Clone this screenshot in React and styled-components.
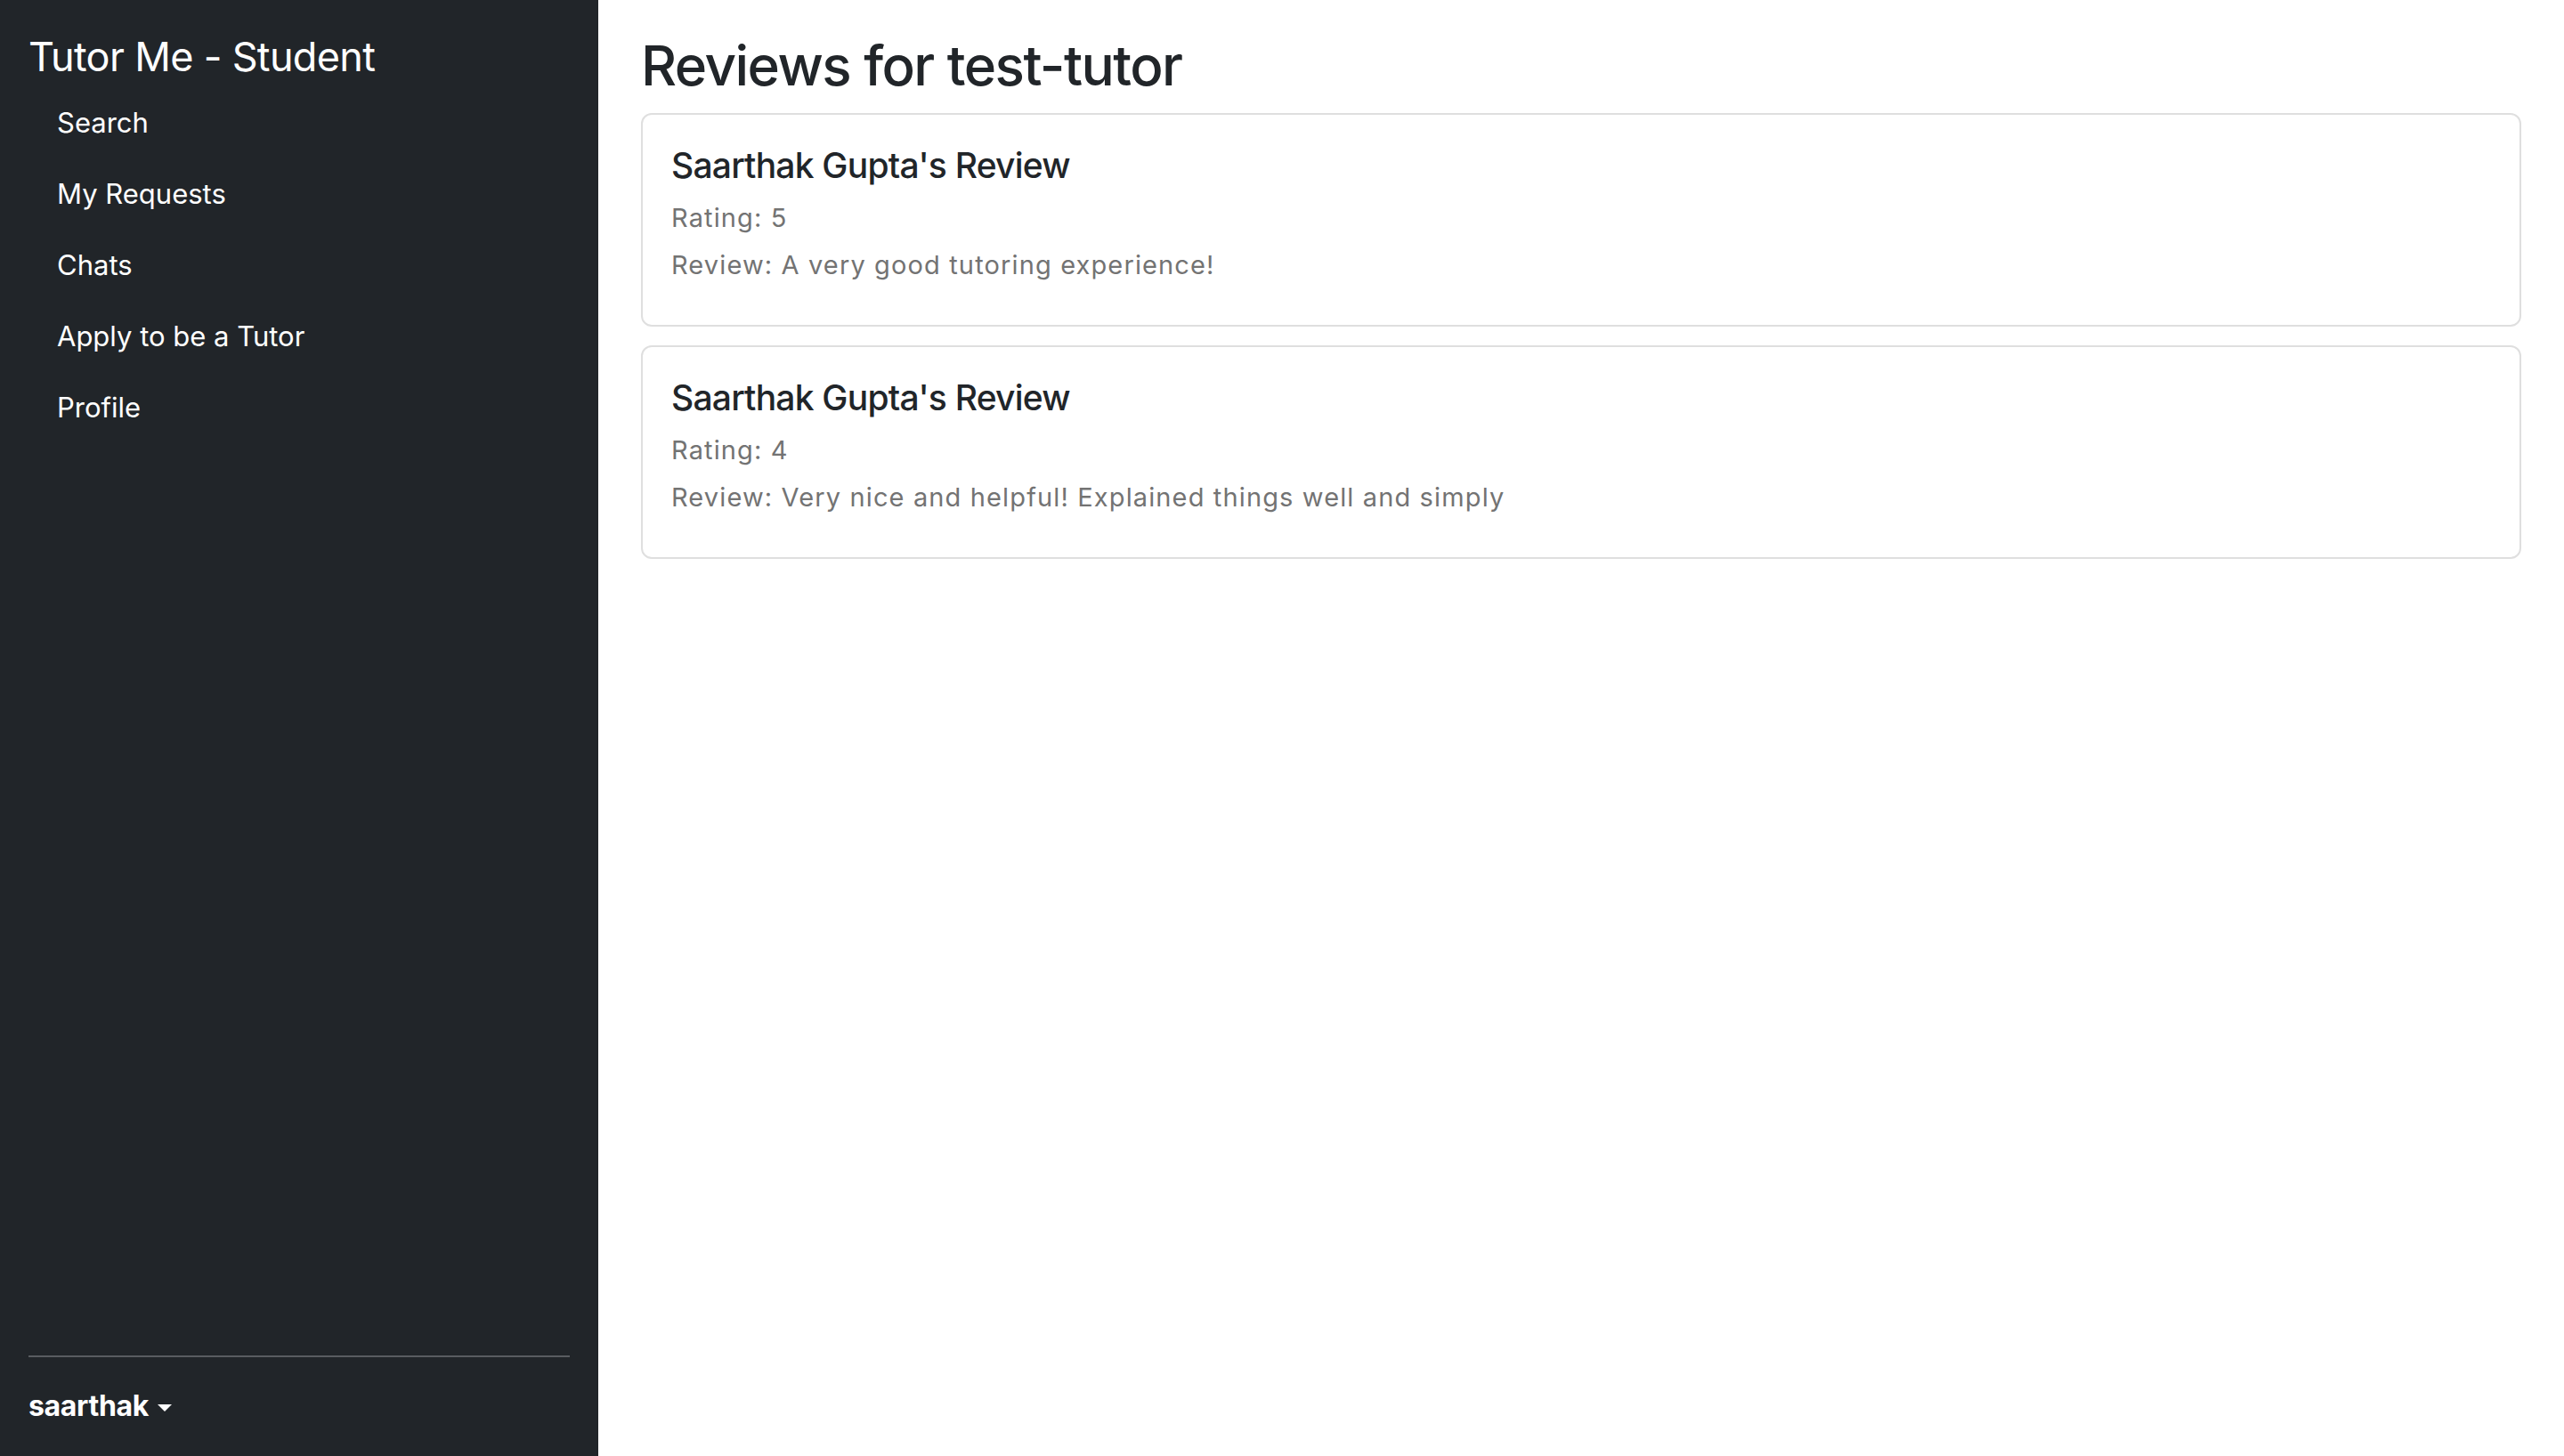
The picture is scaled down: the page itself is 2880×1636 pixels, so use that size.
import styled, { createGlobalStyle } from 'styled-components'

const GlobalStyle = createGlobalStyle`
  html, body {
    margin: 0;
    padding: 0;
    background: #ffffff;
  }
  body {
    font-family: Inter, "Liberation Sans", Arial, sans-serif;
    color: #212529;
  }
  * {
    box-sizing: border-box;
  }
`

const Layout = styled.div`
  display: flex;
  height: 100vh;
  width: 100%;
`

const Sidebar = styled.aside`
  display: flex;
  flex-direction: column;
  flex-shrink: 0;
  width: 672px;
  padding: 32px;
  background-color: #212529;
  color: #ffffff;
`

const Brand = styled.a`
  display: block;
  margin-top: 5px;
  font-size: 45px;
  line-height: 54px;
  letter-spacing: -0.015em;
  color: #ffffff;
  text-decoration: none;
`

const NavList = styled.ul`
  display: flex;
  flex-direction: column;
  list-style: none;
  margin: 7px 0 0;
  padding: 0;
`

const NavLink = styled.a`
  display: block;
  padding: 16px 32px;
  font-size: 31px;
  line-height: 48px;
  color: #ffffff;
  text-decoration: none;
`

const Divider = styled.hr`
  margin: auto 0 31px;
  border: 0;
  border-top: 2px solid #595c60;
`

const UserToggle = styled.a`
  display: flex;
  align-items: center;
  font-size: 32px;
  line-height: 48px;
  font-weight: 700;
  color: #ffffff;
  text-decoration: none;
  letter-spacing: -0.01em;

  &::after {
    content: '';
    display: inline-block;
    margin-left: 10px;
    margin-top: 4px;
    border-top: 8px solid #ffffff;
    border-left: 8px solid transparent;
    border-right: 8px solid transparent;
  }
`

const Main = styled.main`
  flex: 1;
  padding: 37px 48px 32px;
`

const PageTitle = styled.h2`
  margin: 0 0 16px;
  font-size: 62px;
  line-height: 1.2;
  font-weight: 500;
  letter-spacing: -0.025em;
  color: #212529;
`

const Card = styled.div`
  border: 2px solid #dfdfdf;
  border-radius: 12px;
  padding: 33px 32px 41px;
  margin-bottom: 21px;
`

const CardTitle = styled.h5`
  margin: 0 0 8px;
  font-size: 39px;
  line-height: 48px;
  font-weight: 500;
  letter-spacing: -0.02em;
  color: #212529;
`

const CardText = styled.p`
  margin: 0;
  font-size: 29px;
  line-height: 53px;
  letter-spacing: 0.039em;
  color: #737373;
`

const links = ['Search', 'My Requests', 'Chats', 'Apply to be a Tutor', 'Profile']

const reviews = [
  { name: 'Saarthak Gupta', rating: 5, text: 'A very good tutoring experience!' },
  { name: 'Saarthak Gupta', rating: 4, text: 'Very nice and helpful! Explained things well and simply' },
]

export default function App() {
  return (
    <>
      <GlobalStyle />
      <Layout>
        <Sidebar>
          <Brand href="#">Tutor Me - Student</Brand>
          <NavList>
            {links.map((label) => (
              <li key={label}>
                <NavLink href="#">{label}</NavLink>
              </li>
            ))}
          </NavList>
          <Divider />
          <UserToggle href="#">saarthak</UserToggle>
        </Sidebar>
        <Main>
          <PageTitle>Reviews for test-tutor</PageTitle>
          {reviews.map((review, index) => (
            <Card key={`${review.name}-${index}`}>
              <CardTitle>{review.name}'s Review</CardTitle>
              <CardText>Rating: {review.rating}</CardText>
              <CardText>Review: {review.text}</CardText>
            </Card>
          ))}
        </Main>
      </Layout>
    </>
  )
}
